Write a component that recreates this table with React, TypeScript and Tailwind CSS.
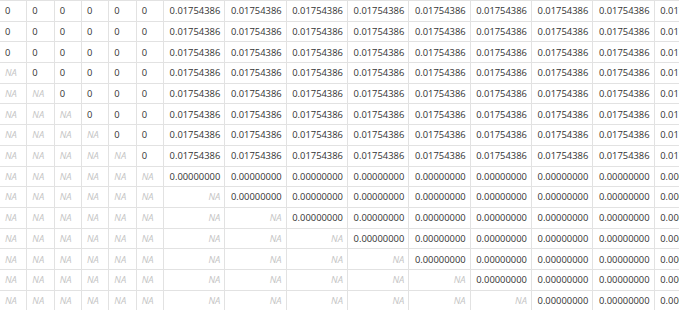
const NARROW = 6;
const WIDE = 9;
const ROWS = 15;

function narrowCell(row: number, col: number) {
  return row >= col + 3 ? null : "0";
}

function wideCell(row: number, col: number) {
  if (row <= 7) return "0.01754386";
  if (row >= col + 9) return null;
  return "0.00000000";
}

export default function App() {
  return (
    <div className="h-[310px] w-[679px] overflow-hidden bg-white font-['Open_Sans',sans-serif] text-[9.4px] text-[#333]">
      <div className="grid w-max grid-cols-[repeat(6,27.33px)_repeat(9,61.33px)] border-t border-[#e2e2e2]">
        {Array.from({ length: ROWS }, (_, r) => (
          <div key={r} className="contents">
            {Array.from({ length: NARROW }, (_, c) => {
              const v = narrowCell(r, c);
              return (
                <div
                  key={`n${c}`}
                  className="flex h-[20.7px] items-center border-r border-b border-[#e2e2e2] pl-[5px] pt-px"
                >
                  {v ?? <span className="italic text-[#c4c4c4]">NA</span>}
                </div>
              );
            })}
            {Array.from({ length: WIDE }, (_, c) => {
              const v = wideCell(r, c);
              return (
                <div
                  key={`w${c}`}
                  className="flex h-[20.7px] items-center justify-end whitespace-nowrap border-r border-b border-[#e2e2e2] pr-[4px] pt-px"
                >
                  {v ?? <span className="italic text-[#c4c4c4]">NA</span>}
                </div>
              );
            })}
          </div>
        ))}
      </div>
    </div>
  );
}
